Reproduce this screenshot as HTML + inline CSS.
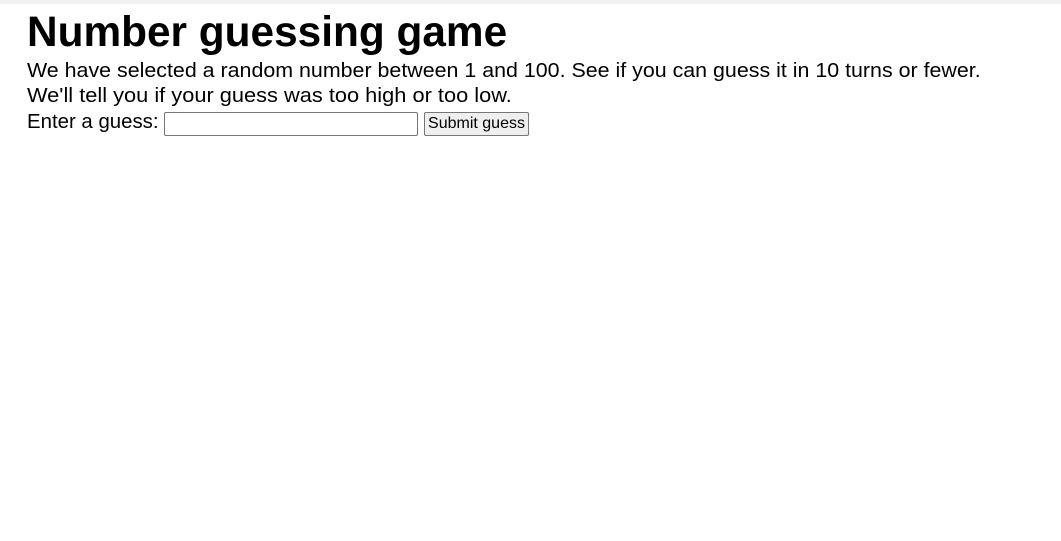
<!DOCTYPE html>
<html><head><style>
html,body{margin:0;padding:0;background:#fff;width:1061px;height:541px;overflow:hidden}
.bar{position:absolute;left:0;top:0;width:1061px;height:4px;background:#f0f0f0}
.t{position:absolute;left:27px;font-family:"Liberation Sans",sans-serif;color:#000;white-space:nowrap;transform-origin:0 0}
input{position:absolute;left:164px;top:112px;border:1px solid #767676;border-radius:2px;padding:0;box-sizing:border-box;width:254px;height:24px}
button{position:absolute;left:424px;top:112px;width:105px;height:24px;font:16px "Liberation Sans",sans-serif;border:1px solid #767676;border-radius:2px;background:#efefef;padding:0}
</style></head><body>
<div class="bar"></div>
<div class="t" style="top:6px;font-size:43px;font-weight:bold;line-height:52px;transform:scaleX(0.985)">Number guessing game</div>
<div class="t" style="top:59px;font-size:20px;line-height:25px;transform:scaleX(1.07)">We have selected a random number between 1 and 100. See if you can guess it in 10 turns or fewer.</div>
<div class="t" style="top:84px;font-size:20px;line-height:25px;transform:scaleX(1.09)">We'll tell you if your guess was too high or too low.</div>
<div class="t" style="top:110px;font-size:20px;line-height:25px;transform:scaleX(1.02)">Enter a guess:</div>
<input type="text">
<button>Submit guess</button>
</body></html>
